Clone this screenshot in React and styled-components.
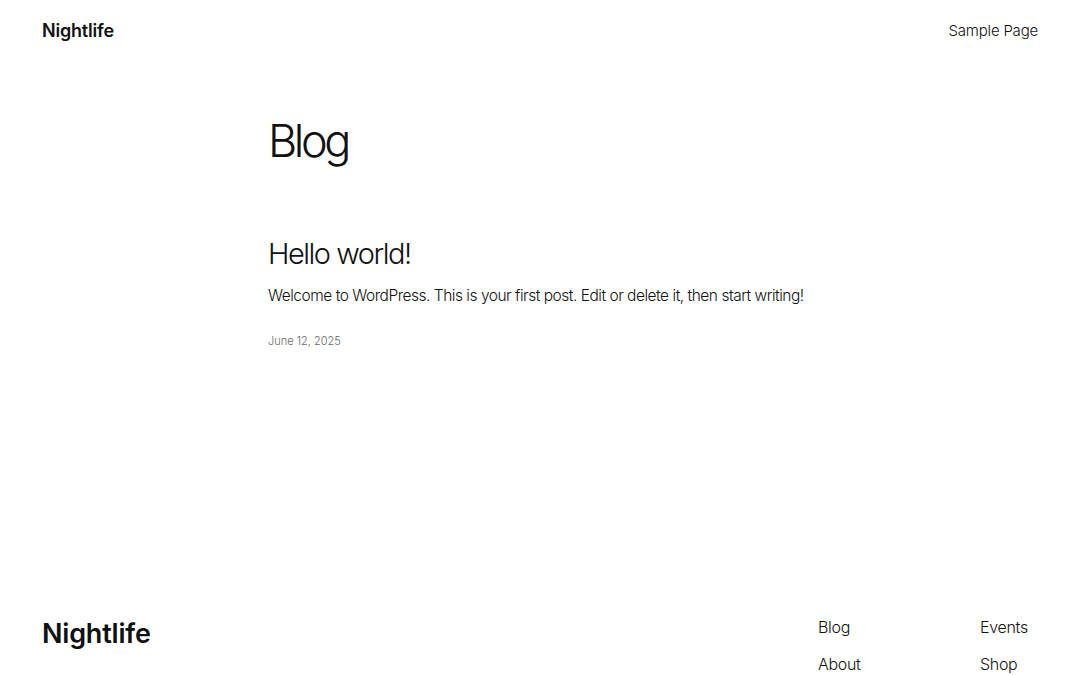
import React from "react";
import styled, { createGlobalStyle } from "styled-components";

const Global = createGlobalStyle`
  html, body { margin: 0; padding: 0; background: #fff; }
  body { font-family: Inter, "Noto Sans", sans-serif; color: #111; -webkit-font-smoothing: antialiased; }
  * { box-sizing: border-box; }
  a { color: inherit; text-decoration: none; }
`;

const Page = styled.div`
  display: flex;
  flex-direction: column;
  min-height: 675px;
`;

const Header = styled.header`
  display: flex;
  justify-content: space-between;
  align-items: center;
  padding: 16px 42px;
  height: 60px;
`;

const SiteTitle = styled.a`
  font-size: ${(p) => p.$size}px;
  font-weight: 600;
  letter-spacing: ${(p) => p.$spacing ?? -0.2}px;
  margin-top: ${(p) => p.$offset || 0}px;
`;

const NavLink = styled.a`
  font-size: 15px;
  font-weight: 300;
  letter-spacing: -0.2px;
`;

const Main = styled.main`
  flex: 1;
  width: 544px;
  margin: 0 auto;
  padding-top: 54px;
`;

const PageTitle = styled.h1`
  margin: 0;
  font-size: 45px;
  font-weight: 300;
  line-height: 1.2;
  letter-spacing: -3.4px;
`;

const Post = styled.article`
  margin-top: 69px;
`;

const PostTitle = styled.h2`
  margin: 0;
  font-size: 29px;
  font-weight: 300;
  line-height: 1.2;
  letter-spacing: -1.5px;
`;

const Excerpt = styled.p`
  margin: 12px 0 0;
  font-size: 15.5px;
  font-weight: 300;
  line-height: 1.5;
  letter-spacing: -0.48px;
  white-space: nowrap;
`;

const PostDate = styled.div`
  margin-top: 27px;
  font-size: 11px;
  font-weight: 300;
  color: #666;
`;

const Footer = styled.footer`
  display: flex;
  justify-content: space-between;
  align-items: flex-start;
  padding: 0 42px;
  height: 72px;
`;

const FooterNav = styled.nav`
  display: grid;
  grid-template-columns: 162px 58px;
  row-gap: 13px;
  padding-top: 12px;
`;

const FooterLink = styled.a`
  font-size: 16px;
  font-weight: 300;
  line-height: 24px;
  letter-spacing: -0.3px;
`;

export default function App() {
  return (
    <>
      <Global />
      <Page>
        <Header>
          <SiteTitle $size={18}>Nightlife</SiteTitle>
          <NavLink>Sample Page</NavLink>
        </Header>
        <Main>
          <PageTitle>Blog</PageTitle>
          <Post>
            <PostTitle>Hello world!</PostTitle>
            <Excerpt>
              Welcome to WordPress. This is your first post. Edit or delete it, then start writing!
            </Excerpt>
            <PostDate>June 12, 2025</PostDate>
          </Post>
        </Main>
        <Footer>
          <SiteTitle $size={27} $spacing={-0.2} $offset={14}>Nightlife</SiteTitle>
          <FooterNav>
            <FooterLink>Blog</FooterLink>
            <FooterLink>Events</FooterLink>
            <FooterLink>About</FooterLink>
            <FooterLink>Shop</FooterLink>
          </FooterNav>
        </Footer>
      </Page>
    </>
  );
}
